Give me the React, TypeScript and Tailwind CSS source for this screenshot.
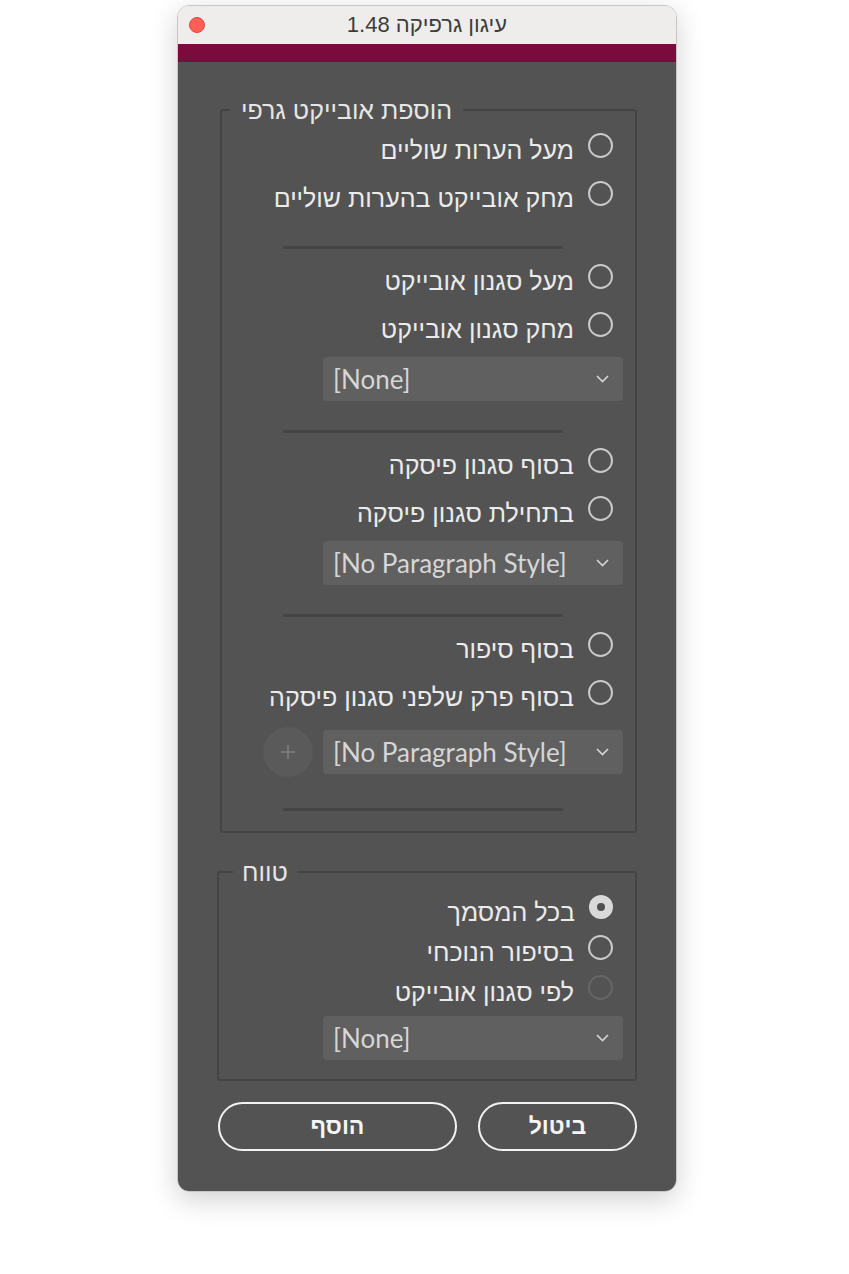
import React from "react";

const heb = "font-['Liberation_Sans','DejaVu_Sans',sans-serif]";
const latin = "font-['Lato','Open_Sans',sans-serif]";

function Radio({
  label,
  checked,
  disabled,
  tall = true,
}: {
  label: string;
  checked?: boolean;
  disabled?: boolean;
  tall?: boolean;
}) {
  return (
    <div className={`flex items-center gap-[14px] pr-[10px] ${tall ? "h-[48px]" : "h-[40px]"}`}>
      {checked ? (
        <span className="flex h-[24px] w-[24px] items-center justify-center rounded-full bg-[#d9d9d9]">
          <span className="h-[8px] w-[8px] rounded-full bg-[#505050]" />
        </span>
      ) : (
        <span
          className={`h-[25px] w-[25px] rounded-full border-2 ${
            disabled ? "border-[#666666]" : "border-[#c9c9c9]"
          }`}
        />
      )}
      <span className={`${heb} pt-[10px] text-[25px] leading-none text-[#ebebeb]`}>{label}</span>
    </div>
  );
}

function Select({ value }: { value: string }) {
  return (
    <div
      dir="ltr"
      className="flex h-[44px] w-[300px] items-center justify-between rounded-[4px] bg-[#606060] pl-[10px] pr-[14px]"
    >
      <span className={`${latin} text-[26px] leading-none text-[#d6d6d6]`}>{value}</span>
      <svg width="13" height="8" viewBox="0 0 13 8" fill="none">
        <path d="M1 1l5.5 5.5L12 1" stroke="#d6d6d6" strokeWidth="1.6" />
      </svg>
    </div>
  );
}

function Sep({ className = "" }: { className?: string }) {
  return <div className={`mr-[60px] h-[3px] w-[280px] bg-[#454545] ${className}`} />;
}

export default function App() {
  return (
    <div className="min-h-[1274px] w-full bg-white pl-[177px] pt-[5px]">
      <div className="w-[500px] overflow-hidden rounded-[12px] border border-[#c6c6c6] shadow-[0_8px_28px_rgba(0,0,0,0.18)]">
        {/* title bar */}
        <div className="relative flex h-[38px] items-center justify-center bg-[#efedeb]">
          <span className="absolute left-[11px] top-[11px] h-[16px] w-[16px] rounded-full border border-[#e2463f] bg-[#ff5f57]" />
          <span className={`${heb} text-[22px] leading-none text-[#3d3d3d]`} dir="rtl">
            עיגון גרפיקה 1.48
          </span>
        </div>
        <div className="h-[18px] bg-[#7b0a3d]" />

        {/* body */}
        <div className="bg-[#535353] pb-[40px] pl-[42px] pr-[39px] pt-[37px]">
          <fieldset className="rounded-[3px] border-2 border-[#444444] p-0">
            <legend className={`${heb} ml-[8px] px-[11px] text-[25px] leading-[22px] text-[#e6e6e6]`} dir="rtl">
              הוספת אובייקט גרפי
            </legend>
            <div dir="rtl" className="flex flex-col items-start pb-[20px] pr-[12px]">
              <Radio label="מעל הערות שוליים" />
              <Radio label="מחק אובייקט בהערות שוליים" />
              <Sep className="mt-[29px]" />
              <div className="mt-[3px]">
                <Radio label="מעל סגנון אובייקט" />
                <Radio label="מחק סגנון אובייקט" />
              </div>
              <div className="mt-[9px]">
                <Select value="[None]" />
              </div>
              <Sep className="mt-[29px]" />
              <div className="mt-[3px]">
                <Radio label="בסוף סגנון פיסקה" />
                <Radio label="בתחילת סגנון פיסקה" />
              </div>
              <div className="mt-[9px]">
                <Select value="[No Paragraph Style]" />
              </div>
              <Sep className="mt-[29px]" />
              <div className="mt-[3px]">
                <Radio label="בסוף סיפור" />
                <Radio label="בסוף פרק שלפני סגנון פיסקה" />
              </div>
              <div className="mt-[11px] flex items-center gap-[10px]">
                <Select value="[No Paragraph Style]" />
                <div className="flex h-[50px] w-[50px] items-center justify-center rounded-full bg-[#5a5a5a]">
                  <svg width="16" height="16" viewBox="0 0 16 16">
                    <path d="M8 1v14M1 8h14" stroke="#7e7e7e" strokeWidth="1.6" />
                  </svg>
                </div>
              </div>
              <Sep className="mt-[31px]" />
            </div>
          </fieldset>

          <fieldset className="-ml-[3px] mt-[28px] rounded-[3px] border-2 border-[#444444] p-0">
            <legend className={`${heb} ml-[14px] px-[9px] text-[25px] leading-[22px] text-[#e6e6e6]`} dir="rtl">
              טווח
            </legend>
            <div dir="rtl" className="flex flex-col items-start pb-[19px] pr-[12px]">
              <div className="mt-[4px]">
                <Radio label="בכל המסמך" checked tall={false} />
                <Radio label="בסיפור הנוכחי" tall={false} />
                <Radio label="לפי סגנון אובייקט" disabled tall={false} />
              </div>
              <div className="mt-[9px]">
                <Select value="[None]" />
              </div>
            </div>
          </fieldset>

          <div dir="rtl" className="-ml-[3px] mt-[21px] flex gap-[21px]">
            <button className={`${heb} h-[49px] w-[159px] rounded-full border-2 border-[#f2f2f2] text-[23px] font-bold text-[#f5f5f5]`}>
              ביטול
            </button>
            <button className={`${heb} h-[49px] w-[239px] rounded-full border-2 border-[#f2f2f2] text-[23px] font-bold text-[#f5f5f5]`}>
              הוסף
            </button>
          </div>
        </div>
      </div>
    </div>
  );
}
